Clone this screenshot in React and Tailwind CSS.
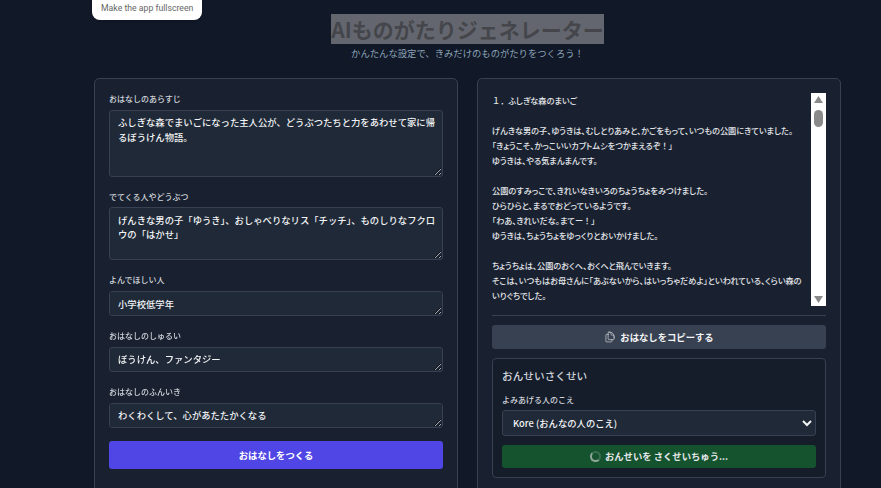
import React from "react";
import { HiOutlineDocumentDuplicate } from "react-icons/hi2";

const story = `１．ふしぎな森のまいご

げんきな男の子、ゆうきは、むしとりあみと、かごをもって、いつもの公園にきていました。
「きょうこそ、かっこいいカブトムシをつかまえるぞ！」
ゆうきは、やる気まんまんです。

公園のすみっこで、きれいなきいろのちょうちょをみつけました。
ひらひらと、まるでおどっているようです。
「わあ、きれいだな。まてー！」
ゆうきは、ちょうちょをゆっくりとおいかけました。

ちょうちょは、公園のおくへ、おくへと飛んでいきます。
そこは、いつもはお母さんに「あぶないから、はいっちゃだめよ」といわれている、くらい森のいりぐちでした。`;

const fields = [
  { label: "おはなしのあらすじ", value: "ふしぎな森でまいごになった主人公が、どうぶつたちと力をあわせて家に帰るぼうけん物語。", h: "h-[67px]" },
  { label: "でてくる人やどうぶつ", value: "げんきな男の子「ゆうき」、おしゃべりなリス「チッチ」、ものしりなフクロウの「はかせ」", h: "h-[53px]" },
  { label: "よんでほしい人", value: "小学校低学年", h: "h-[25px]" },
  { label: "おはなしのしゅるい", value: "ぼうけん、ファンタジー", h: "h-[25.5px]" },
  { label: "おはなしのふんいき", value: "わくわくして、心があたたかくなる", h: "h-[25px]" },
];

const Field = ({ label, value, h }) => (
  <div className="flex flex-col">
    <label className="text-[8px] leading-[10.67px] font-medium text-[#d1d5db] mb-[5px]">{label}</label>
    <textarea
      readOnly
      defaultValue={value}
      className={`${h} w-full bg-[#1f2937] border border-[#374151] rounded-[3px] pl-[8px] pr-[1px] py-[4.5px] text-[9.33px] leading-[14.5px] font-medium text-[#f3f4f6] outline-none`}
    />
  </div>
);

// ！ and １． keep their full width, everything else is set proportional
const StoryText = () =>
  story.split("\n").map((line, n) => (
    <div key={n} className="min-h-[15px]">
      {line.split(/(！|１．)/).map((part, i) =>
        i % 2 === 1 ? (
          <span key={i} className="[font-feature-settings:normal]">{part}</span>
        ) : (
          part
        )
      )}
    </div>
  ));

const FakeScrollbar = () => (
  <div className="w-[15px] shrink-0 bg-white flex flex-col items-center justify-between py-[3px]">
    <div className="flex flex-col items-center gap-[7px]">
      <svg width="9" height="7" viewBox="0 0 9 7">
        <path d="M4.5 0 L9 7 L0 7 Z" fill="#8a8a8a" />
      </svg>
      <div className="w-[9px] h-[17px] rounded-full bg-[#8a8a8a]" />
    </div>
    <svg width="9" height="7" viewBox="0 0 9 7">
      <path d="M0 0 L9 0 L4.5 7 Z" fill="#8a8a8a" />
    </svg>
  </div>
);

export default function App() {
  return (
    <div className="relative h-screen overflow-hidden bg-[#111827] font-['Noto_Sans_CJK_JP',sans-serif]">
      {/* fullscreen hint */}
      <div className="absolute left-[92px] top-[-10px] w-[110px] h-[30px] bg-white rounded-[8px] shadow-sm flex items-end pl-[9px] pb-[7px] font-['Roboto',sans-serif] text-[8.7px] leading-[10px] text-[#666]">
        Make the app fullscreen
      </div>

      <div className="w-[747px] ml-[94px]">
        <div className="flex flex-col items-center pt-[14px]">
          <h1 className="text-[21px] leading-[30px] font-bold text-[#45464b] bg-[#63666e]">AIものがたりジェネレーター</h1>
          <p className="text-[9.33px] leading-[14px] text-[#8ba3b8] mt-[2px]">かんたんな設定で、きみだけのものがたりをつくろう！</p>
        </div>

        <div className="flex gap-[19px] mt-[18px]">
          {/* left form */}
          <div className="w-[364px] shrink-0 bg-[#192130] border border-[#374151] rounded-[5px] px-[14px] pt-[15px] pb-[16px]">
            <div className="flex flex-col gap-[15px]">
              {fields.map((f) => (
                <Field key={f.label} {...f} />
              ))}
            </div>
            <button className="mt-[13.5px] w-full h-[28px] bg-[#4f46e5] rounded-[3px] text-[9.33px] font-bold text-white">
              おはなしをつくる
            </button>
          </div>

          {/* right output */}
          <div className="w-[364px] shrink-0 bg-[#192130] border border-[#374151] rounded-[5px] px-[14px] pt-[14px] pb-[16px]">
            <div className="h-[213px] flex justify-between overflow-hidden">
              <div className="w-[312px] text-[8.2px] leading-[15px] font-medium text-[#e5e7eb] [font-feature-settings:'palt']">
                <StoryText />
              </div>
              <FakeScrollbar />
            </div>
            <div className="border-t border-[#374151] mt-[9px] pt-[9px]">
              <button className="w-full h-[24px] flex items-center justify-center gap-[4px] bg-[#374151] rounded-[3px] text-[9.33px] font-bold text-[#f3f4f6]">
                <HiOutlineDocumentDuplicate className="w-[12px] h-[12px] text-[#c5c8cd]" />
                おはなしをコピーする
              </button>
            </div>
            <div className="mt-[9px] h-[120px] bg-[#151d2b] border border-[#374151] rounded-[4px] px-[9px] pt-[9px]">
              <h3 className="text-[10.67px] leading-[16px] font-medium text-[#d1d5db]">おんせいさくせい</h3>
              <p className="mt-[11px] text-[8px] leading-[10.67px] font-medium text-[#d1d5db]">よみあげる人のこえ</p>
              <select className="mt-[4px] w-full h-[26px] bg-[#1f2937] border border-[#374151] rounded-[3px] pl-[6px] text-[9.33px] font-medium text-[#f3f4f6] [color-scheme:dark]">
                <option>Kore (おんなの人のこえ)</option>
              </select>
              <button className="mt-[9px] w-full h-[23px] flex items-center justify-center gap-[4px] bg-[#14532d] rounded-[3px] text-[9.33px] font-bold text-[#e5e7eb]">
                <span className="w-[11px] h-[11px] rounded-full border-[2px] border-[#8fa598] border-t-[#3a6f50] border-r-[#3a6f50]" />
                おんせいを さくせいちゅう...
              </button>
            </div>
          </div>
        </div>
      </div>
    </div>
  );
}
